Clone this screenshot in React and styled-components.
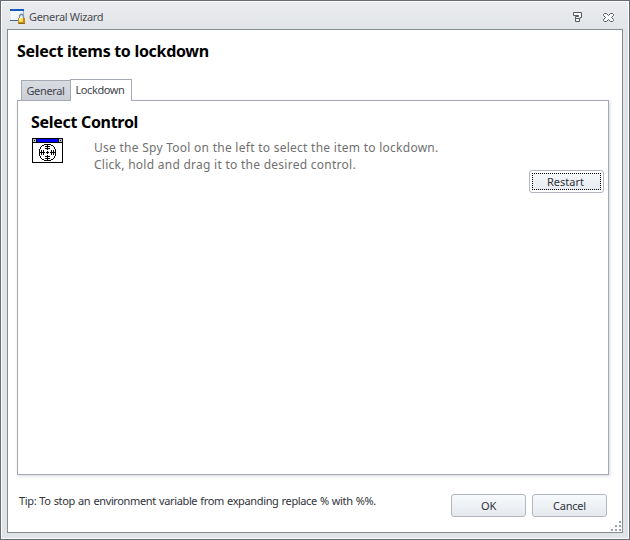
import React from "react";
import styled, { createGlobalStyle } from "styled-components";

const GlobalStyle = createGlobalStyle`
  * { box-sizing: border-box; }
  body { margin: 0; font-family: "Noto Sans", "Open Sans", sans-serif; }
`;

const Window = styled.div`
  width: 630px;
  height: 540px;
  display: flex;
  flex-direction: column;
  padding: 1px 6px 6px;
  border: 1px solid #676b75;
  box-shadow: inset 0 0 0 1px #fbfcfd;
  background: linear-gradient(#ebecef, #e1e4e7 30px);
`;

const TitleBar = styled.header`
  height: 27px;
  flex: none;
  display: flex;
  align-items: center;
  padding: 1px 9px 0 3px;
`;

const WindowTitle = styled.h1`
  flex: 1;
  margin: 2px 0 0 2px;
  font-size: 11px;
  font-weight: 400;
  line-height: 16px;
  letter-spacing: ${(p) => p.$spacing};
  color: #484a50;
`;

const WindowControls = styled.div`
  display: flex;
  align-items: center;
  gap: 20px;
  padding-top: 3px;
`;

const ControlButton = styled.button`
  display: block;
  padding: 0;
  border: 0;
  background: none;
  height: 11px;
  svg { display: block; }
`;

const Content = styled.main`
  position: relative;
  flex: 1;
  display: flex;
  flex-direction: column;
  padding: 12px 14px 0 9px;
  border: 1px solid #868b92;
  background: #fff;
`;

const Heading = styled.h2`
  margin: 0;
  height: ${(p) => p.$height};
  font-size: 16px;
  font-weight: 700;
  line-height: 18px;
  letter-spacing: ${(p) => p.$spacing};
  color: #000;
  white-space: nowrap;
`;

const Tabs = styled.div`
  display: flex;
  align-items: flex-end;
  height: 22px;
  padding-left: 4px;
  margin-bottom: -1px;
  z-index: 1;
`;

const Tab = styled.button`
  width: ${(p) => (p.$active ? "62px" : "50px")};
  height: ${(p) => (p.$active ? "22px" : "20px")};
  margin: ${(p) => (p.$active ? "0 0 0 -1px" : "0 0 1px")};
  padding: ${(p) => (p.$active ? "0 2px 1px 0" : "1px 1px 0 0")};
  border: 1px solid #a5a9b2;
  border-bottom: 0;
  background: ${(p) => (p.$active ? "#fff" : "linear-gradient(#d9dce1, #cbced5)")};
  font: 11px/16px "Noto Sans", sans-serif;
  letter-spacing: ${(p) => p.$spacing};
  color: #41434b;
`;

const Panel = styled.section`
  width: 592px;
  height: 375px;
  display: flex;
  flex-direction: column;
  padding: 12px 4px 0 13px;
  border: 1px solid #a5a9b2;
  box-shadow: 1px 1px 3px #d4d5da;
`;

const Instruction = styled.div`
  display: flex;
  align-items: flex-start;
  gap: 31px;
  padding-left: 1px;
  height: 32px;
  svg { flex: none; }
`;

const InstructionText = styled.p`
  margin: 1px 0 0;
  font-size: 12px;
  line-height: 17px;
  letter-spacing: 0.265px;
  color: #707070;
  white-space: nowrap;
`;

const Button = styled.button`
  width: 75px;
  height: 23px;
  padding: 1px;
  border: 1px solid #b3b6bd;
  border-radius: 3px;
  background: linear-gradient(#f7fafc, #e5e9ee);
  font: 11px/16px "Noto Sans", sans-serif;
  letter-spacing: ${(p) => p.$spacing || "0"};
  color: #30323a;
`;

const FocusedButton = styled(Button)`
  align-self: flex-end;
  padding: 2px;
  box-shadow: inset 0 0 0 2px #fff;
`;

const FocusRing = styled.span`
  display: block;
  height: 17px;
  border: 1px dotted #000;
  line-height: 15px;
  padding-right: 2px;
`;

const Footer = styled.footer`
  display: flex;
  align-items: flex-start;
  gap: 6px;
  padding: 19px 1px 0 2px;
`;

const Tip = styled.p`
  flex: 1;
  margin: -1px 0 0;
  font-size: 11px;
  line-height: 16px;
  letter-spacing: ${(p) => p.$spacing};
  word-spacing: 0.6px;
  color: #30323a;
  white-space: nowrap;
`;

const ResizeGrip = styled.svg`
  position: absolute;
  right: 1px;
  bottom: 1px;
`;

function WizardIcon() {
  return (
    <svg width="17" height="17" viewBox="0 0 17 17" shapeRendering="crispEdges">
      <path fill="#f8fbff" d="M1 2h13v11H1z" />
      <path fill="#dce8f7" d="M10 4h4v5h-4z" />
      <path fill="#165bc0" d="M0 1h14v2H0z" />
      <path fill="#8eb5e5" d="M13 3h1v4h-1z" />
      <path fill="#3c699c" d="M0 12h8v1H0z" />
      <path fill="none" stroke="#7e8da1" strokeWidth="1.3" shapeRendering="auto" d="M9.5 11V8.5a2 2 0 0 1 4 0V11" />
      <path fill="#c1881a" d="M8 10h7v6H8z" />
      <path fill="#ffda3b" d="M9 10h4v4H9z" />
      <path fill="#fff0a0" d="M9 10h2v3H9z" />
      <path fill="#94691d" d="M9 15h6v1H9z" />
    </svg>
  );
}

function RestoreIcon() {
  return (
    <svg width="10" height="11" viewBox="0 0 10 11" fill="none" stroke="#54585f">
      <path fill="#f7f8fa" d="M.5.5h8v5H7v1H2.5v-2h3v-1h-5z" />
      <path fill="#f7f8fa" d="M2.5 6.5h4v3h-4z" />
    </svg>
  );
}

function CloseIcon() {
  return (
    <svg width="11" height="10" viewBox="0 0 11 10">
      <path fill="#fafbfc" stroke="#54585f" d="M1.5.5h2l2 2 2-2h2l1 1v1l-2 2 2 2v1l-1 1h-2l-2-2-2 2h-2l-1-1v-1l2-2-2-2v-1z" />
    </svg>
  );
}

function SpyToolIcon() {
  return (
    <svg width="31" height="25" viewBox="0 0 31 25" shapeRendering="crispEdges">
      <path d="M0 0h31v25H0z" />
      <path fill="#fff" d="M1 5h29v19H1z" />
      <path fill="#00f" d="M5 1h21v3H5z" />
      <path fill="#c0c0c0" d="M1 1h3v3H1zM27 1h3v3h-3z" />
      <path d="M2 2h1v1H2zM28 2h1v1h-1z" />
      <path d="M12 6h7v1h-7zM10 7h2v1h-2zM19 7h2v1h-2zM9 8h1v1H9zM21 8h1v1h-1zM8 9h1v2H8zM22 9h1v2h-1zM7 11h1v7H7zM23 11h1v7h-1zM8 18h1v2H8zM22 18h1v2h-1zM9 20h1v1H9zM21 20h1v1h-1zM10 21h2v1h-2zM19 21h2v1h-2zM12 22h7v1h-7z" />
      <path d="M15 6h1v6h-1zM15 17h1v6h-1zM7 14h6v1H7zM18 14h6v1h-6zM13 8h5v1h-5zM13 10h5v1h-5zM13 18h5v1h-5zM13 20h5v1h-5zM9 12h1v5H9zM11 12h1v5h-1zM19 12h1v5h-1zM21 12h1v5h-1zM15 13h1v3h-1zM14 14h3v1h-3z" />
    </svg>
  );
}

export default function App() {
  return (
    <>
      <GlobalStyle />
      <Window>
        <TitleBar>
          <WizardIcon />
          <WindowTitle $spacing="-0.33px">General Wizard</WindowTitle>
          <WindowControls>
            <ControlButton aria-label="Restore"><RestoreIcon /></ControlButton>
            <ControlButton aria-label="Close"><CloseIcon /></ControlButton>
          </WindowControls>
        </TitleBar>
        <Content>
          <Heading $height="37px" $spacing="-0.3px">Select items to lockdown</Heading>
          <Tabs>
            <Tab $spacing="-0.35px">General</Tab>
            <Tab $active $spacing="-0.4px">Lockdown</Tab>
          </Tabs>
          <Panel>
            <Heading as="h3" $height="25px" $spacing="-0.3px">Select Control</Heading>
            <Instruction>
              <SpyToolIcon />
              <InstructionText>
                Use the Spy Tool on the left to select the item to lockdown.<br />
                Click, hold and drag it to the desired control.
              </InstructionText>
            </Instruction>
            <FocusedButton><FocusRing>Restart</FocusRing></FocusedButton>
          </Panel>
          <Footer>
            <Tip $spacing="-0.36px">Tip: To stop an environment variable from expanding replace % with %%.</Tip>
            <Button $spacing="-0.2px">OK</Button>
            <Button $spacing="-0.2px">Cancel</Button>
          </Footer>
          <ResizeGrip width="10" height="10" fill="#9a9ea6" shapeRendering="crispEdges">
            <path d="M8 0h2v2H8zM4 4h2v2H4zM8 4h2v2H8zM0 8h2v2H0zM4 8h2v2H4zM8 8h2v2H8z" />
          </ResizeGrip>
        </Content>
      </Window>
    </>
  );
}
